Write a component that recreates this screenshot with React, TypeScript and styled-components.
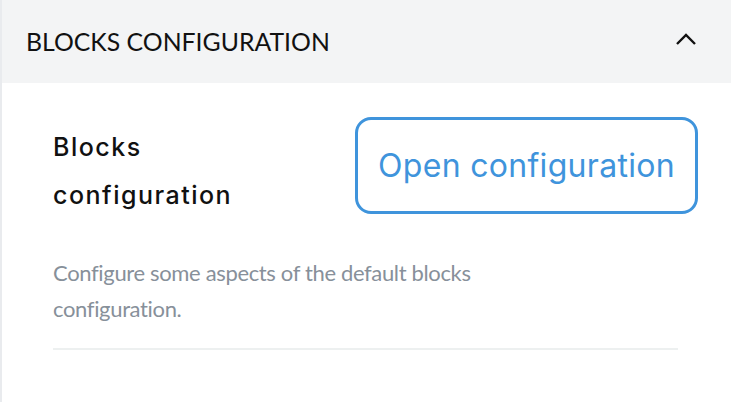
import React from "react";
import styled, { createGlobalStyle } from "styled-components";

const Global = createGlobalStyle`
  html, body { margin: 0; padding: 0; background: #ffffff; }
  * { box-sizing: border-box; }
`;

const Panel = styled.section`
  width: 731px;
  height: 402px;
  border-left: 2px solid #e9ebee;
  background: #ffffff;
  overflow: hidden;
`;

const Header = styled.header`
  height: 83px;
  background: #f3f4f5;
  display: flex;
  align-items: center;
  justify-content: space-between;
  padding: 0 34px 0 24px;
`;

const Title = styled.h2`
  margin: 0;
  font-family: Lato, "Liberation Sans", sans-serif;
  font-weight: 400;
  font-size: 24.8px;
  color: #111111;
  text-transform: uppercase;
`;

const Chevron = styled.svg`
  width: 22px;
  height: 14px;
  margin-top: -6px;
`;

const Body = styled.div`
  padding: 34px 33px 0 51px;
`;

const Row = styled.div`
  display: flex;
  align-items: flex-start;
  justify-content: space-between;
`;

const Label = styled.div`
  width: 220px;
  padding-top: 6px;
  font-family: Inter, "Noto Sans", sans-serif;
  font-weight: 500;
  font-size: 25px;
  letter-spacing: 1.5px;
  line-height: 48px;
  color: #111111;
`;

const OutlineButton = styled.button`
  width: 343px;
  height: 97px;
  border: 3px solid #3f94dc;
  border-radius: 16px;
  background: #ffffff;
  color: #3f94dc;
  font-family: Inter, "Noto Sans", sans-serif;
  font-size: 32px;
  font-weight: 400;
  letter-spacing: 0.3px;
  padding: 0;
  cursor: pointer;
`;

const Description = styled.p`
  margin: 36px 0 0;
  max-width: 440px;
  font-family: Lato, "Liberation Sans", sans-serif;
  font-size: 22px;
  letter-spacing: -0.35px;
  line-height: 36px;
  color: #87909a;
`;

const Divider = styled.hr`
  margin: 21px 20px 0 0;
  border: 0;
  height: 2px;
  background: #edf0f0;
`;

export default function App() {
  return (
    <>
      <Global />
      <Panel>
        <Header>
          <Title>Blocks Configuration</Title>
          <Chevron viewBox="0 0 22 14" fill="none">
            <path d="M2 12 L11 3 L20 12" stroke="#111" strokeWidth="2.4" />
          </Chevron>
        </Header>
        <Body>
          <Row>
            <Label>Blocks configuration</Label>
            <OutlineButton>Open configuration</OutlineButton>
          </Row>
          <Description>
            Configure some aspects of the default blocks configuration.
          </Description>
          <Divider />
        </Body>
      </Panel>
    </>
  );
}
